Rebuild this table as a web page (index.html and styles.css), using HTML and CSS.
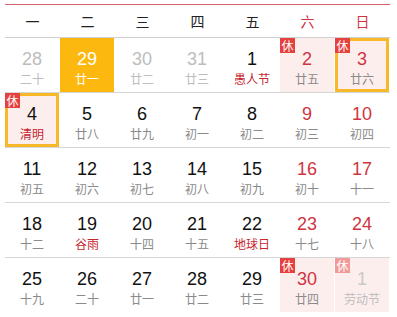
FILE: index.html
```html
<!DOCTYPE html>
<html lang="zh">
<head>
<meta charset="utf-8">
<link rel="stylesheet" href="styles.css">
</head>
<body>
<div class="cal">
  <div class="head">
    <div>一</div><div>二</div><div>三</div><div>四</div><div>五</div><div class="we">六</div><div class="we">日</div>
  </div>
  <div class="week">
    <div class="cell other"><span class="num">28</span><span class="lun">二十</span></div>
    <div class="cell today"><span class="num">29</span><span class="lun">廿一</span></div>
    <div class="cell other"><span class="num">30</span><span class="lun">廿二</span></div>
    <div class="cell other"><span class="num">31</span><span class="lun">廿三</span></div>
    <div class="cell"><span class="num">1</span><span class="lun fest">愚人节</span></div>
    <div class="cell we rest"><span class="badge">休</span><span class="num">2</span><span class="lun">廿五</span></div>
    <div class="cell we rest sel"><span class="badge">休</span><span class="num">3</span><span class="lun">廿六</span></div>
  </div>
  <div class="week">
    <div class="cell rest sel"><span class="badge">休</span><span class="num">4</span><span class="lun fest">清明</span></div>
    <div class="cell"><span class="num">5</span><span class="lun">廿八</span></div>
    <div class="cell"><span class="num">6</span><span class="lun">廿九</span></div>
    <div class="cell"><span class="num">7</span><span class="lun">初一</span></div>
    <div class="cell"><span class="num">8</span><span class="lun">初二</span></div>
    <div class="cell we"><span class="num">9</span><span class="lun">初三</span></div>
    <div class="cell we"><span class="num">10</span><span class="lun">初四</span></div>
  </div>
  <div class="week">
    <div class="cell"><span class="num">11</span><span class="lun">初五</span></div>
    <div class="cell"><span class="num">12</span><span class="lun">初六</span></div>
    <div class="cell"><span class="num">13</span><span class="lun">初七</span></div>
    <div class="cell"><span class="num">14</span><span class="lun">初八</span></div>
    <div class="cell"><span class="num">15</span><span class="lun">初九</span></div>
    <div class="cell we"><span class="num">16</span><span class="lun">初十</span></div>
    <div class="cell we"><span class="num">17</span><span class="lun">十一</span></div>
  </div>
  <div class="week">
    <div class="cell"><span class="num">18</span><span class="lun">十二</span></div>
    <div class="cell"><span class="num">19</span><span class="lun fest">谷雨</span></div>
    <div class="cell"><span class="num">20</span><span class="lun">十四</span></div>
    <div class="cell"><span class="num">21</span><span class="lun">十五</span></div>
    <div class="cell"><span class="num">22</span><span class="lun fest">地球日</span></div>
    <div class="cell we"><span class="num">23</span><span class="lun">十七</span></div>
    <div class="cell we"><span class="num">24</span><span class="lun">十八</span></div>
  </div>
  <div class="week last">
    <div class="cell"><span class="num">25</span><span class="lun">十九</span></div>
    <div class="cell"><span class="num">26</span><span class="lun">二十</span></div>
    <div class="cell"><span class="num">27</span><span class="lun">廿一</span></div>
    <div class="cell"><span class="num">28</span><span class="lun">廿二</span></div>
    <div class="cell"><span class="num">29</span><span class="lun">廿三</span></div>
    <div class="cell we rest"><span class="badge">休</span><span class="num">30</span><span class="lun">廿四</span></div>
    <div class="cell rest next"><span class="badge">休</span><span class="num">1</span><span class="lun">劳动节</span></div>
  </div>
</div>
</body>
</html>
```

FILE: styles.css
```css
html, body {
  margin: 0;
  padding: 0;
  background: #fff;
}
body {
  font-family: "Liberation Sans", Arial, "Noto Sans CJK SC", sans-serif;
}
.cal {
  margin: 4px 0 0 5px;
  width: 385px;
  border-top: 1px solid #d9666a;
}
.head {
  display: grid;
  grid-template-columns: repeat(7, 55px);
  height: 32px;
  border-bottom: 1px solid #d0d0d0;
  font-family: "Noto Sans CJK SC", sans-serif;
  font-size: 14px;
  color: #222;
}
.head div {
  display: flex;
  align-items: center;
  justify-content: center;
}
.head .we {
  color: #d0343f;
}
.week {
  display: grid;
  grid-template-columns: repeat(7, 55px);
  border-bottom: 1px solid #d6d6d6;
}
.week.last {
  border-bottom: none;
}
.cell {
  position: relative;
  width: 54px;
  height: 54px;
  box-sizing: border-box;
  padding-top: 11px;
  display: flex;
  flex-direction: column;
  align-items: center;
}
.num {
  font-size: 18px;
  line-height: 21px;
  color: #111;
}
.lun {
  font-family: "Noto Sans CJK SC", sans-serif;
  font-size: 12px;
  line-height: 18px;
  color: #8a8a8a;
}
.lun.fest {
  color: #c6262e;
}
.cell.we .num {
  color: #d0343f;
}
.cell.other .num,
.cell.other .lun {
  color: #bdbdbd;
}
.cell.today {
  background: #fdb80f;
}
.cell.today .num,
.cell.today .lun {
  color: #fff;
}
.cell.rest {
  background: #fdeeee;
}
.cell.sel {
  box-shadow: inset 0 0 0 3px #f7b829;
}
.badge {
  position: absolute;
  top: 0;
  left: 0;
  width: 15px;
  height: 15px;
  background: #e6403f;
  color: #fff;
  font-family: "Noto Sans CJK SC", sans-serif;
  font-size: 12px;
  line-height: 15px;
  text-align: center;
}
.cell.next .badge {
  background: #f19a9a;
}
.cell.next .num {
  color: #c9c9c9;
}
.cell.next .lun {
  color: #bdbdbd;
}
```
